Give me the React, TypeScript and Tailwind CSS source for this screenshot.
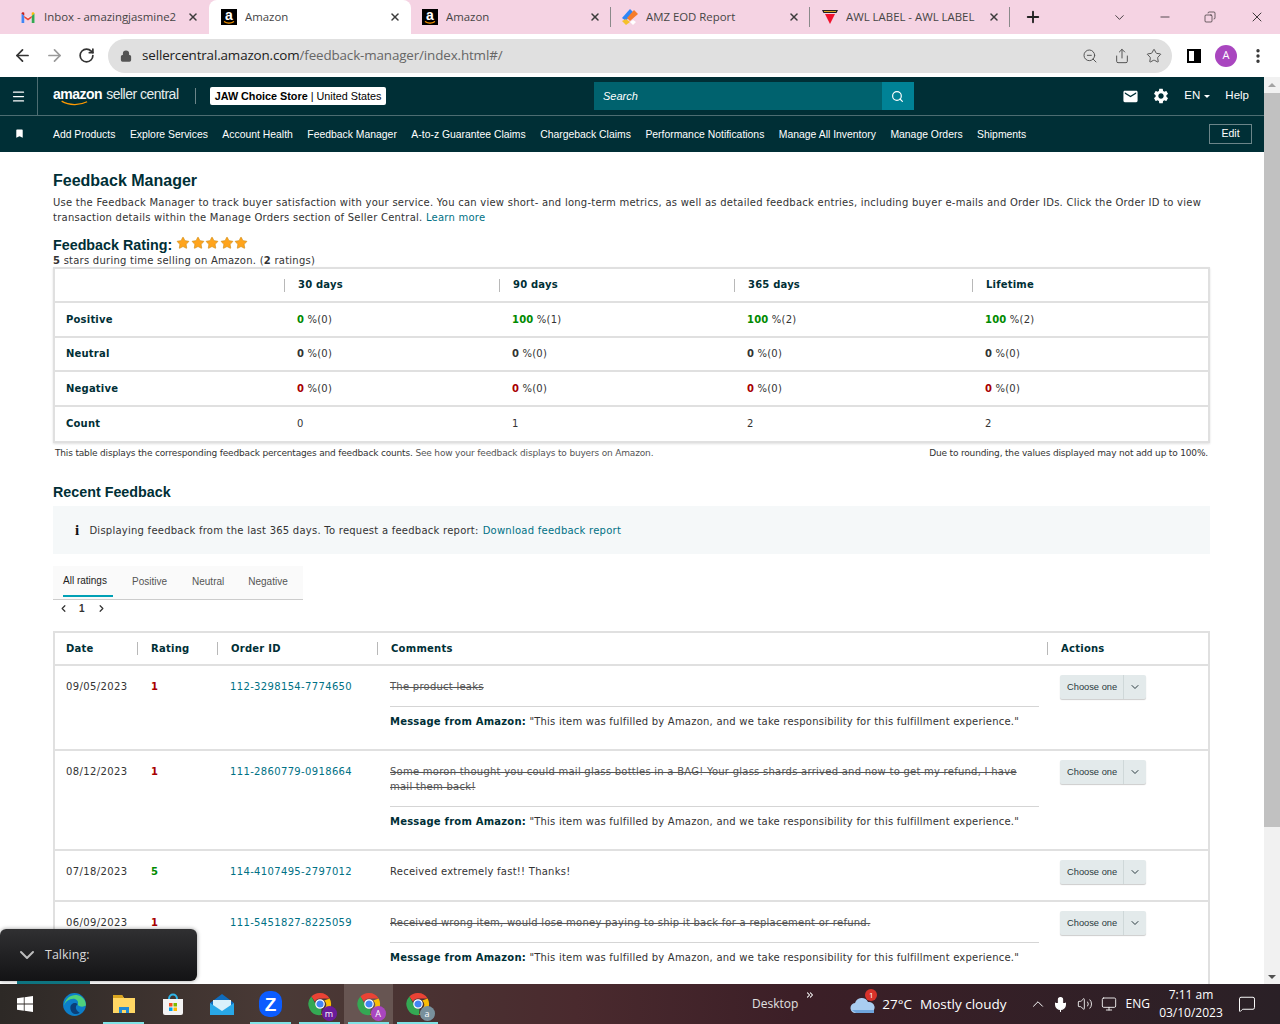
import React from "react";
import {
  ArrowLeft,
  ArrowRight,
  ChevronDown,
  ChevronLeft,
  ChevronRight,
  ChevronUp,
  ChevronsRight,
  Copy,
  Lock,
  Menu,
  Mic,
  Minus,
  Monitor,
  MoreVertical,
  Plus,
  RotateCw,
  Search,
  Share,
  Star,
  Volume2,
  X,
  ZoomOut,
  MessageSquare,
} from "lucide-react";
import { MdBookmark, MdEmail, MdSettings } from "react-icons/md";

const NAV_LINKS = [
  "Add Products",
  "Explore Services",
  "Account Health",
  "Feedback Manager",
  "A-to-z Guarantee Claims",
  "Chargeback Claims",
  "Performance Notifications",
  "Manage All Inventory",
  "Manage Orders",
  "Shipments",
];

const MESSAGE = '"This item was fulfilled by Amazon, and we take responsibility for this fulfillment experience."';

const RATING_ROWS = [
  { label: "Positive", color: "text-[#008a00]", values: [["0", "(0)"], ["100", "(1)"], ["100", "(2)"], ["100", "(2)"]] },
  { label: "Neutral", color: "text-[#333333]", values: [["0", "(0)"], ["0", "(0)"], ["0", "(0)"], ["0", "(0)"]] },
  { label: "Negative", color: "text-[#a80000]", values: [["0", "(0)"], ["0", "(0)"], ["0", "(0)"], ["0", "(0)"]] },
];

const FEEDBACK = [
  { date: "09/05/2023", rating: "1", order: "112-3298154-7774650", comment: "The product leaks", struck: true, h: "h-[85px]" },
  {
    date: "08/12/2023",
    rating: "1",
    order: "111-2860779-0918664",
    comment: "Some moron thought you could mail glass bottles in a BAG! Your glass shards arrived and now to get my refund, I have mail them back!",
    struck: true,
    h: "h-[100px]",
  },
  { date: "07/18/2023", rating: "5", order: "114-4107495-2797012", comment: "Received extremely fast!! Thanks!", struck: false, h: "h-[51px]" },
  { date: "06/09/2023", rating: "1", order: "111-5451827-8225059", comment: "Received wrong item, would lose money paying to ship it back for a replacement or refund.", struck: true, h: "h-[90px]" },
];

function AmazonFavicon() {
  return (
    <span className="relative flex h-[16px] w-[16px] shrink-0 items-start justify-center bg-black">
      <span className="font-['Liberation_Sans',sans-serif] text-[14px] font-bold leading-[13px] text-white">a</span>
      <svg viewBox="0 0 16 16" className="absolute inset-0 h-[16px] w-[16px]">
        <path d="M3 12.5c3 2 7 2 10 0" stroke="#f90" strokeWidth="1.3" fill="none" />
      </svg>
    </span>
  );
}

function GmailIcon() {
  return (
    <svg viewBox="0 0 16 14" className="h-[13px] w-[16px] shrink-0">
      <path d="M1 13V2l7 5.5L15 2v11h-3V7L8 10 4 7v6z" fill="#fff" />
      <path d="M1 13V2.5L4 5v8z" fill="#4285f4" />
      <path d="M15 13V2.5L12 5v8z" fill="#34a853" />
      <path d="M4 5v2.2L8 10.3l4-3.1V5L8 8z" fill="#ea4335" />
      <path d="M1 3c0-1.5 1.5-2 2.5-1.3L4 2v3L1 2.7z" fill="#c5221f" />
      <path d="M15 3c0-1.5-1.5-2-2.5-1.3L12 2v3l3-2.3z" fill="#fbbc04" />
    </svg>
  );
}

function AmzIcon() {
  return (
    <svg viewBox="0 0 18 18" className="h-[18px] w-[18px] shrink-0">
      <path d="M1 10 L9 1 L12 4 L5 13z" fill="#2f86f6" />
      <path d="M6 10 L13 2 L17 6 L9 13z" fill="#f57c2a" />
      <path d="M1 13 L5 17 L9 14 L5 11z" fill="#f5c02a" />
      <path d="M9 14 l3 3 l3-3 l-3-2z" fill="#fff" />
    </svg>
  );
}

function AwlIcon() {
  return (
    <svg viewBox="0 0 16 16" className="h-[16px] w-[16px] shrink-0">
      <path d="M0 1h16l-1.5 3h-13z" fill="#222" />
      <path d="M3 5h10l-5 10z" fill="#f0122d" />
      <path d="M2 2h12v1H2z" fill="#d9a520" />
    </svg>
  );
}

function Tab({ icon, title, active, separator, width, inset }: { icon: React.ReactNode; title: string; active?: boolean; separator?: boolean; width: string; inset: string }) {
  return (
    <div className={`relative flex h-[34px] items-center ${inset} ${width} ${separator ? "pr-0" : "pr-[10px]"} ${active ? "rounded-t-[8px] bg-white" : ""}`}>
      <span className="flex w-[16px] justify-center">{icon}</span>
      <span className="ml-[8px] min-w-0 flex-1 overflow-hidden whitespace-nowrap text-[11.4px] text-[#454545]">{title}</span>
      <X size={12} strokeWidth={3} className="ml-[4px] shrink-0 text-[#3c3c3c]" />
      {separator && <span className="ml-[9px] h-[20px] w-px shrink-0 bg-[#8a8a8a]" />}
    </div>
  );
}

function ChromeLogo({ badge, badgeColor }: { badge: string; badgeColor: string }) {
  return (
    <span className="relative block h-[24px] w-[24px]">
      <svg viewBox="0 0 24 24" className="h-[24px] w-[24px]">
        <path d="M12 1a11 11 0 0 1 9.6 5.5H12a5.5 5.5 0 0 0-5 3.2L3.4 4.6A11 11 0 0 1 12 1z" fill="#ea4335" />
        <path d="M21.6 6.5A11 11 0 0 1 13 23l4.3-7.4a5.5 5.5 0 0 0-1-7z" fill="#fbbc04" />
        <path d="M13 23A11 11 0 0 1 3.4 4.6L7.8 12.5a5.5 5.5 0 0 0 5.6 4.5z" fill="#34a853" />
        <circle cx="12" cy="12" r="4.2" fill="#4285f4" stroke="#fff" strokeWidth="1.2" />
      </svg>
      <span className={`absolute bottom-[-5px] right-[-5px] flex h-[15px] w-[15px] items-center justify-center rounded-full text-[9px] leading-none text-white ${badgeColor}`}>{badge}</span>
    </span>
  );
}

function TaskSlot({ children, line, active }: { children: React.ReactNode; line?: boolean; active?: boolean }) {
  return (
    <div className={`relative flex h-[40px] w-[49px] items-center justify-center ${active ? "bg-[#675552]" : ""}`}>
      {children}
      {line && <span className="absolute bottom-0 left-[4px] right-[4px] h-[2px] bg-[#7fe3e6]" />}
    </div>
  );
}

function StarIcon() {
  return <Star size={14} strokeWidth={1} className="fill-[#ffa41c] text-[#c8860f]" />;
}

function BrowserChrome() {
  return (
    <>
      <div className="flex h-[34px] shrink-0 items-center bg-[#f5d3e3] font-['Open_Sans',sans-serif]">
        <Tab width="w-[209px]" inset="pl-[20px]" icon={<GmailIcon />} title="Inbox - amazingjasmine2" />
        <Tab width="w-[202px]" inset="pl-[12px]" icon={<AmazonFavicon />} title="Amazon" active />
        <Tab width="w-[200px]" inset="pl-[11px]" icon={<AmazonFavicon />} title="Amazon" separator />
        <Tab width="w-[199px]" inset="pl-[11px]" icon={<AmzIcon />} title="AMZ EOD Report" separator />
        <Tab width="w-[200px]" inset="pl-[12px]" icon={<AwlIcon />} title="AWL LABEL - AWL LABEL" separator />
        <Plus size={18} strokeWidth={2.5} className="ml-[14px] text-[#222]" />
        <div className="ml-auto flex items-center text-[#111]">
          <ChevronDown size={15} strokeWidth={1.2} className="mr-[31px]" />
          <Minus size={14} strokeWidth={1.2} className="mr-[32px]" />
          <Copy size={12} strokeWidth={1.2} className="mr-[33px] scale-x-[-1]" />
          <X size={16} strokeWidth={1.2} className="mr-[15px]" />
        </div>
      </div>
      <div className="flex h-[43px] shrink-0 items-center bg-white font-['Open_Sans',sans-serif]">
        <div className="flex items-center pl-[13px]">
          <ArrowLeft size={19} strokeWidth={2.2} className="text-[#333]" />
          <ArrowRight size={19} strokeWidth={2.2} className="ml-[13px] text-[#9a9a9a]" />
          <RotateCw size={17} strokeWidth={2.4} className="ml-[14px] text-[#333]" />
        </div>
        <div className="ml-[13px] flex h-[34px] w-[1064px] items-center rounded-full bg-[#e0e0e0] pl-[12px] pr-[10px]">
          <Lock size={12} strokeWidth={2.5} className="fill-[#555] text-[#555]" />
          <span className="ml-[10px] text-[13.4px] tracking-[-0.13px] text-[#202020]">
            sellercentral.amazon.com<span className="text-[#666]">/feedback-manager/index.html#/</span>
          </span>
          <div className="ml-auto flex items-center gap-[16px] text-[#555]">
            <ZoomOut size={16} strokeWidth={1.5} />
            <Share size={16} strokeWidth={1.5} />
            <Star size={16} strokeWidth={1.5} />
          </div>
        </div>
        <span className="ml-[15px] flex h-[14px] w-[14px] justify-end border-[2px] border-black bg-white">
          <span className="h-full w-[5px] bg-black" />
        </span>
        <span className="ml-[14px] flex h-[22px] w-[22px] items-center justify-center rounded-full bg-[#a946bf] text-[11px] text-white">A</span>
        <MoreVertical size={18} strokeWidth={2.5} className="ml-[12px] text-[#333]" />
      </div>
    </>
  );
}

function SellerNav() {
  return (
    <header className="shrink-0 bg-[#002f36] font-['Liberation_Sans',sans-serif] text-white">
      <div className="flex h-[39px] items-center border-b border-[#4d6d72]">
        <div className="flex h-full w-[38px] items-center justify-center border-r border-[#4d6d72]">
          <Menu size={15} strokeWidth={2} />
        </div>
        <div className="relative ml-[15px] flex h-[24px] w-[127px] items-start whitespace-nowrap leading-[20px]">
          <span className="text-[14px] font-bold tracking-[-0.5px]">amazon</span>
          <span className="ml-[4px] text-[14px] font-normal tracking-[-0.5px] text-[#e6ecec]">seller central</span>
          <svg viewBox="0 0 44 8" className="absolute left-[8px] top-[16px] h-[6px] w-[28px]">
            <path d="M1 1c12 7 28 7 40 1" stroke="#f90" strokeWidth="2" fill="none" />
          </svg>
        </div>
        <span className="ml-[15px] h-[16px] w-px bg-[#6c8589]" />
        <div className="ml-[14px] flex h-[18px] w-[176px] items-center justify-center whitespace-nowrap rounded-[2px] bg-white text-[10.8px] text-black">
          <span className="font-bold">JAW Choice Store</span>
          <span className="mx-[3px] font-normal">|</span>
          <span className="font-normal">United States</span>
        </div>
        <div className="ml-[208px] flex h-[28px] w-[320px]">
          <div className="flex flex-1 items-center bg-[#00626e] pl-[9px] text-[11px] italic text-white">Search</div>
          <div className="flex w-[32px] items-center justify-center bg-[#008296]">
            <Search size={13} strokeWidth={2.2} className="-ml-[2px]" />
          </div>
        </div>
        <div className="ml-auto flex items-center pr-[15px]">
          <MdEmail size={17} />
          <MdSettings size={18} className="ml-[13px]" />
          <span className="ml-[14px] text-[11.5px]">EN</span>
          <span className="ml-[4px] mt-[1px] h-0 w-0 border-x-[3px] border-t-[3px] border-x-transparent border-t-white" />
          <span className="ml-[15px] text-[11.5px] font-normal">Help</span>
        </div>
      </div>
      <div className="flex h-[36px] items-center">
        <MdBookmark size={11} className="ml-[14px] -mt-[2px]" />
        <div className="ml-[28px] flex gap-[14.5px] whitespace-nowrap pt-[2px] text-[10.4px]">
          {NAV_LINKS.map((link) => (
            <span key={link}>{link}</span>
          ))}
        </div>
        <div className="ml-auto mr-[12px] flex h-[20px] w-[43px] items-center justify-center border border-[#6c8589] text-[10.5px]">Edit</div>
      </div>
    </header>
  );
}

function RatingTable() {
  return (
    <div className="-mt-[1px] border-2 border-[#e0e0e0] text-[10px] leading-none tracking-[0.2px] text-[#333] shadow-[0_1px_2px_rgba(0,0,0,0.12)]">
      <div className="grid h-[34px] grid-cols-[229px_215px_235px_238px_1fr] items-center border-b-2 border-[#e0e0e0] font-bold">
        <span />
        {["30 days", "90 days", "365 days", "Lifetime"].map((head) => (
          <span key={head} className="flex h-[13px] items-center border-l border-[#b8b8b8] pl-[13px] text-[#002f36]">
            {head}
          </span>
        ))}
      </div>
      {RATING_ROWS.map((row) => (
        <div key={row.label} className="grid h-[34.5px] grid-cols-[229px_215px_235px_238px_1fr] items-center border-b-2 border-[#e0e0e0] pt-[1px]">
          <span className="pl-[11px] font-bold text-[#002f36]">{row.label}</span>
          {row.values.map(([pct, count], i) => (
            <span key={i} className="pl-[13px]">
              <b className={row.color}>{pct}</b> %{count}
            </span>
          ))}
        </div>
      ))}
      <div className="grid h-[34.5px] grid-cols-[229px_215px_235px_238px_1fr] items-center pt-[1px]">
        <span className="pl-[11px] font-bold text-[#002f36]">Count</span>
        {["0", "1", "2", "2"].map((n, i) => (
          <span key={i} className="pl-[13px]">{n}</span>
        ))}
      </div>
    </div>
  );
}

function FeedbackTable() {
  return (
    <div className="mt-[15px] border-x-2 border-t-2 border-[#e0e0e0] text-[10px] leading-[15px] tracking-[0.25px] text-[#333]">
      <div className="grid h-[33px] grid-cols-[82px_80px_160px_670px_1fr] items-center border-b-2 border-[#e0e0e0] font-bold text-[#002f36]">
        <span className="pl-[11px]">Date</span>
        {["Rating", "Order ID", "Comments", "Actions"].map((head) => (
          <span key={head} className="flex h-[13px] items-center border-l border-[#b8b8b8] pl-[13px]">
            {head}
          </span>
        ))}
      </div>
      {FEEDBACK.map((row) => (
        <div key={row.order} className={`grid grid-cols-[82px_80px_160px_670px_1fr] border-b-2 border-[#e0e0e0] pt-[13px] ${row.h}`}>
          <span className="pl-[11px] tracking-[0.4px]">{row.date}</span>
          <span className={`pl-[14px] font-bold ${row.rating === "5" ? "text-[#008a00]" : "text-[#a80000]"}`}>{row.rating}</span>
          <span className="pl-[13px] tracking-[0.35px] text-[#007185]">{row.order}</span>
          <div className="pl-[13px] pr-[8px]">
            <p className={row.struck ? "text-[#555] line-through" : ""}>{row.comment}</p>
            {row.struck && (
              <p className="mt-[12px] border-t border-[#d5d5d5] pt-[7px] tracking-[0.22px]">
                <b className="text-[#002f36]">Message from Amazon:</b> {MESSAGE}
              </p>
            )}
          </div>
          <div className="-mt-[4px] pl-[13px]">
            <div className="flex h-[24px] w-[86px] items-center rounded-[2px] bg-[#e3eaeb] font-['Liberation_Sans',sans-serif] text-[9.3px] tracking-normal text-[#2a3a40] shadow-[0_1px_1px_rgba(0,0,0,0.2)]">
              <span className="flex-1 pl-[7px]">Choose one</span>
              <span className="flex h-full w-[23px] items-center justify-center border-l border-[#cfd8d9]">
                <ChevronDown size={12} strokeWidth={2} />
              </span>
            </div>
          </div>
        </div>
      ))}
    </div>
  );
}

function MainContent() {
  return (
    <main className="flex-1 overflow-hidden bg-white pl-[53px] pr-[54px] pt-[19px] font-['DejaVu_Sans',sans-serif] text-[10px] leading-[15px] tracking-[0.245px] text-[#333]">
      <h1 className="font-['Liberation_Sans',sans-serif] text-[16px] font-bold leading-[20px] tracking-normal text-[#002f36]">Feedback Manager</h1>
      <p className="mt-[4px]">
        Use the Feedback Manager to track buyer satisfaction with your service. You can view short- and long-term metrics, as well as detailed feedback entries, including buyer e-mails and Order IDs. Click the Order ID to view transaction details within the Manage Orders section of Seller Central. <span className="text-[#007185]">Learn more</span>
      </p>
      <div className="mt-[12px] flex h-[16px] items-center pt-[1px]">
        <h2 className="font-['Liberation_Sans',sans-serif] text-[14.3px] font-bold tracking-normal text-[#002f36]">Feedback Rating:</h2>
        <span className="ml-[4px] mt-[-5px] flex gap-[0.5px]">
          {[0, 1, 2, 3, 4].map((i) => (
            <StarIcon key={i} />
          ))}
        </span>
      </div>
      <p>
        <b>5</b> stars during time selling on Amazon. (<b>2</b> ratings)
      </p>
      <RatingTable />
      <div className="mt-[3px] flex justify-between px-[2px] text-[9px] tracking-[-0.17px]">
        <span>
          This table displays the corresponding feedback percentages and feedback counts. <span className="text-[#555]">See how your feedback displays to buyers on Amazon.</span>
        </span>
        <span>Due to rounding, the values displayed may not add up to 100%.</span>
      </div>
      <h2 className="mt-[22px] font-['Liberation_Sans',sans-serif] text-[14.3px] font-bold leading-[18px] tracking-normal text-[#002f36]">Recent Feedback</h2>
      <div className="mt-[5px] flex h-[48px] items-center bg-[#f5f8f9] pl-[22px]">
        <span className="font-['Liberation_Serif',serif] text-[15px] font-bold leading-none text-[#111]">i</span>
        <span className="ml-[10px]">Displaying feedback from the last 365 days. To request a feedback report:</span>
        <span className="ml-[4px] text-[#007185]">Download feedback report</span>
      </div>
      <div className="mt-[12px] flex h-[34px] w-[250px] items-start border-b border-[#cccccc] bg-[#fafafa] pl-[10px] font-['Liberation_Sans',sans-serif] text-[10px] tracking-normal text-[#555]">
        <span className="flex h-[31px] w-[50px] items-center border-b-2 border-[#00a0b5] text-[#222]">All ratings</span>
        <span className="ml-[19px] flex h-[31px] items-center">Positive</span>
        <span className="ml-[25px] flex h-[31px] items-center">Neutral</span>
        <span className="ml-[24px] flex h-[31px] items-center">Negative</span>
      </div>
      <div className="ml-[5px] mt-[1px] flex h-[15px] items-center font-['Liberation_Sans',sans-serif] text-[10px] font-bold text-[#333]">
        <ChevronLeft size={11} strokeWidth={2.6} />
        <span className="ml-[10px]">1</span>
        <ChevronRight size={11} strokeWidth={2.6} className="ml-[11px]" />
      </div>
      <FeedbackTable />
    </main>
  );
}

function Scrollbar() {
  return (
    <div className="flex w-[16px] shrink-0 flex-col items-center bg-[#f1f1f1]">
      <span className="mt-[6px] h-0 w-0 border-x-[4px] border-b-[4px] border-x-transparent border-b-[#a3a3a3]" />
      <span className="mt-[6px] h-[734px] w-full bg-[#c1c1c1]" />
      <span className="mt-auto mb-[5px] h-0 w-0 border-x-[4px] border-t-[4px] border-x-transparent border-t-[#505050]" />
    </div>
  );
}

function Taskbar() {
  return (
    <footer className="flex h-[40px] shrink-0 items-center bg-[linear-gradient(90deg,#2d2926_0%,#4a3a36_22%,#4a2a2e_45%,#3c1f27_62%,#2a2026_100%)] font-['Open_Sans',sans-serif] text-white">
      <div className="flex w-[50px] justify-center">
        <svg viewBox="0 0 16 16" className="h-[16px] w-[16px]" fill="#fff">
          <path d="M0 2.3 6.8 1.3v6.3H0zM7.6 1.2 16 0v7.6H7.6zM0 8.4h6.8v6.3L0 13.7zM7.6 8.4H16V16l-8.4-1.2z" />
        </svg>
      </div>
      <TaskSlot>
        <svg viewBox="0 0 24 24" className="h-[25px] w-[25px]">
          <circle cx="12" cy="12" r="11" fill="#0c7ec9" />
          <path d="M2 13C3 6 9 2 15 3c5 1 8 5 8 10-3 2-7 1-8-1 2-4-3-7-7-5-3 1-5 3-6 6z" fill="#4fd17c" />
          <path d="M8 15c0-4 5-6 7-3-2 1-3 5 2 8-4 3-9 0-9-5z" fill="#0b3f78" />
        </svg>
      </TaskSlot>
      <TaskSlot line>
        <svg viewBox="0 0 24 24" className="h-[24px] w-[24px]">
          <path d="M1 3h9l2 3h11v15H1z" fill="#ffd764" />
          <path d="M1 3h9l2 3H1z" fill="#d9a520" />
          <path d="M7 21v-6h10v6h-3v-3h-4v3z" fill="#1f8ad4" />
        </svg>
      </TaskSlot>
      <TaskSlot>
        <svg viewBox="0 0 24 24" className="h-[24px] w-[24px]">
          <path d="M2 7h20v14a2 2 0 0 1-2 2H4a2 2 0 0 1-2-2z" fill="#f3f3f3" />
          <path d="M8 7c0-6 8-6 8 0" stroke="#2fb5e8" strokeWidth="2" fill="none" />
          <path d="M8 11h3.5v3.5H8z" fill="#f25022" />
          <path d="M12.5 11H16v3.5h-3.5z" fill="#7fba00" />
          <path d="M8 15.5h3.5V19H8z" fill="#00a4ef" />
          <path d="M12.5 15.5H16V19h-3.5z" fill="#ffb900" />
        </svg>
      </TaskSlot>
      <TaskSlot>
        <svg viewBox="0 0 24 24" className="h-[24px] w-[24px]">
          <path d="M12 2 24 11v12H0V11z" fill="#0f6cbd" />
          <path d="M3 8h18v9l-9 5-9-5z" fill="#d9f1fb" />
          <path d="M0 11l12 8 12-8v12H0z" fill="#29a8e8" />
        </svg>
      </TaskSlot>
      <TaskSlot line>
        <span className="flex h-[26px] w-[23px] items-center justify-center rounded-[10px] bg-[#0b5cff] font-['Liberation_Sans',sans-serif] text-[19px] font-bold leading-none">Z</span>
      </TaskSlot>
      <TaskSlot line>
        <ChromeLogo badge="m" badgeColor="bg-[#6a1b9a]" />
      </TaskSlot>
      <TaskSlot line active>
        <ChromeLogo badge="A" badgeColor="bg-[#a946bf]" />
      </TaskSlot>
      <TaskSlot line>
        <ChromeLogo badge="a" badgeColor="bg-[#78909c]" />
      </TaskSlot>
      <span className="ml-[310px] text-[12px] text-[#e0e0e0]">Desktop</span>
      <ChevronsRight size={10} strokeWidth={2.5} className="mb-[18px] ml-[7px]" />
      <div className="relative ml-[35px] h-[18px] w-[26px]">
        <svg viewBox="0 0 26 18" className="h-[18px] w-[26px]">
          <path d="M6 18a5 5 0 0 1-1-10 7 7 0 0 1 13-1 5.5 5.5 0 0 1 2 11z" fill="#a9cdf0" />
          <path d="M2 15h22v3H6z" fill="#6fa4dc" />
        </svg>
        <span className="absolute right-[-1px] top-[-6px] flex h-[12px] w-[12px] items-center justify-center rounded-full bg-[#d8322a] text-[8px] leading-none">1</span>
      </div>
      <span className="ml-[6px] text-[13.5px]">27°C</span>
      <span className="ml-[8px] text-[13.5px]">Mostly cloudy</span>
      <ChevronUp size={18} strokeWidth={1.3} className="ml-[22px]" />
      <Mic size={17} strokeWidth={1.5} className="ml-[5px] fill-white" />
      <Volume2 size={16} strokeWidth={1.3} className="ml-[8px]" />
      <Monitor size={16} strokeWidth={1.3} className="ml-[8px]" />
      <span className="ml-[9px] text-[12px]">ENG</span>
      <div className="ml-[11px] flex w-[60px] flex-col items-center text-[12px] leading-[18px]">
        <span>7:11 am</span>
        <span>03/10/2023</span>
      </div>
      <MessageSquare size={18} strokeWidth={1.3} className="ml-[17px]" />
    </footer>
  );
}

export default function App() {
  return (
    <div className="relative flex h-[1024px] w-[1280px] flex-col overflow-hidden bg-white">
      <BrowserChrome />
      <div className="flex min-h-0 flex-1">
        <div className="flex min-w-0 flex-1 flex-col">
          <SellerNav />
          <MainContent />
        </div>
        <Scrollbar />
      </div>
      <Taskbar />
      {/* meeting widget floats over the page */}
      <div className="absolute bottom-[43px] left-0 flex h-[52px] w-[197px] items-center rounded-r-[6px] rounded-tl-[6px] bg-[linear-gradient(180deg,#303032,#131315)] font-['Open_Sans',sans-serif] text-[12.5px] text-[#d8d8d8] shadow-[0_0_4px_rgba(0,0,0,0.4)]">
        <ChevronDown size={24} strokeWidth={2} className="ml-[15px] text-[#bdbdbd]" />
        <span className="ml-[6px]">Talking:</span>
      </div>
      <span className="absolute bottom-[40px] left-[17px] h-[3px] w-[73px] bg-[#0e7480]" />
    </div>
  );
}
